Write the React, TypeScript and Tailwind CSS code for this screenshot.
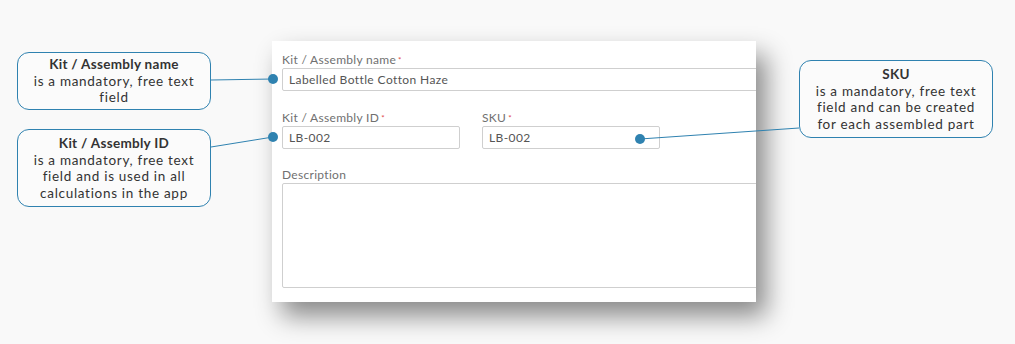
const font = { fontFamily: 'Lato, "Open Sans", sans-serif' }

function Callout({ title, lines, className }: { title: string; lines: string[]; className: string }) {
  return (
    <div
      className={`w-[194px] rounded-[12px] border border-[#2f82b0] bg-[#fbfbfb] flex flex-col items-center justify-center text-center text-[13.5px] tracking-[0.7px] leading-[16.5px] text-[#333] ${className}`}
    >
      <div className="font-bold tracking-[0.3px]">{title}</div>
      {lines.map((l) => (
        <div key={l}>{l}</div>
      ))}
    </div>
  )
}

function Field({ label, value, className = '' }: { label: string; value?: string; className?: string }) {
  return (
    <div className={`flex flex-col ${className}`}>
      <div className="text-[12px] tracking-[0.3px] leading-[14px] text-[#707070] mb-[1px]">
        {label}
        <span className="text-[#e04848] text-[8px] align-top ml-[2px]">*</span>
      </div>
      <div className="h-[23px] border border-[#cfcfcf] rounded-[2px] bg-white px-[6px] flex items-center text-[12px] tracking-[0.4px] text-[#555]">
        {value}
      </div>
    </div>
  )
}

export default function App() {
  return (
    <div className="relative w-[1015px] h-[344px] bg-[#f9f9f9] overflow-hidden flex" style={font}>
      {/* left callouts */}
      <div className="flex flex-col pl-[17px] pt-[52px] gap-[19px]">
        <Callout title="Kit / Assembly name" lines={['is a mandatory, free text', 'field']} className="h-[58px]" />
        <Callout
          title="Kit / Assembly ID"
          lines={['is a mandatory, free text', 'field and is used in all', 'calculations in the app']}
          className="h-[78px]"
        />
      </div>

      {/* form panel */}
      <div className="ml-[61px] mt-[41px] w-[484px] h-[261px] bg-white overflow-hidden shadow-[10px_14px_24px_rgba(0,0,0,0.45)] pl-[10px] pt-[12px] flex flex-col">
        <Field label="Kit / Assembly name" value="Labelled Bottle Cotton Haze" className="w-[500px]" />
        <div className="flex gap-[22px] mt-[20px]">
          <Field label="Kit / Assembly ID" value="LB-002" className="w-[178px]" />
          <Field label="SKU" value="LB-002" className="w-[178px]" />
        </div>
        <div className="mt-[19px] text-[12px] tracking-[0.3px] leading-[14px] text-[#707070]">Description</div>
        <div className="mt-[1px] w-[500px] h-[105px] border border-[#cfcfcf] rounded-[2px] bg-white" />
      </div>

      {/* right callout */}
      <div className="ml-[43px] pt-[60px]">
        <Callout
          title="SKU"
          lines={['is a mandatory, free text', 'field and can be created', 'for each assembled part']}
          className="h-[78px]"
        />
      </div>

      {/* connector lines */}
      <svg className="absolute inset-0 pointer-events-none" width="1015" height="344">
        <g stroke="#2f82b0" strokeWidth="1" fill="none">
          <line x1="211" y1="80" x2="273" y2="79" />
          <line x1="211" y1="147" x2="273" y2="137" />
          <line x1="640" y1="139" x2="799" y2="128" />
        </g>
        <g fill="#2f82b0">
          <circle cx="273" cy="79" r="5" />
          <circle cx="273" cy="137" r="5" />
          <circle cx="640" cy="139" r="5" />
        </g>
      </svg>
    </div>
  )
}
